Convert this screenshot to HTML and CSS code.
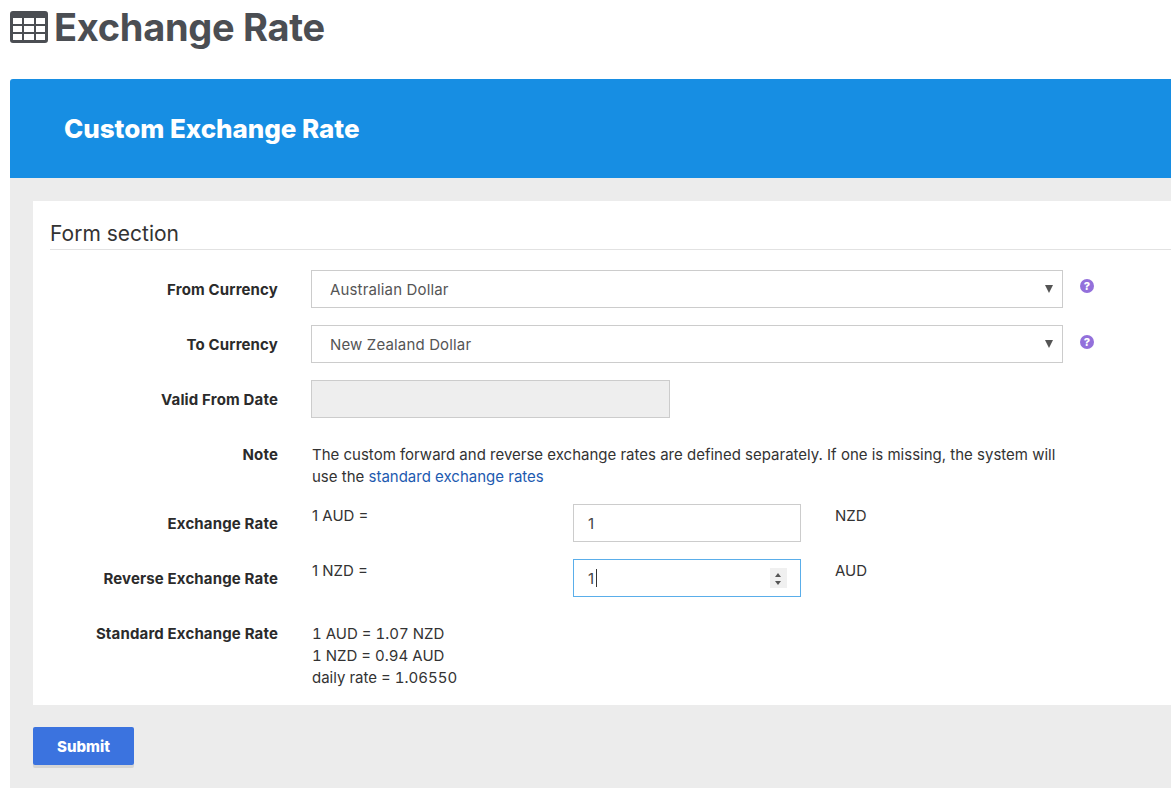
FILE: index.html
```html
<!DOCTYPE html>
<html lang="en">
<head>
<meta charset="utf-8">
<title>Exchange Rate</title>
<link rel="stylesheet" href="styles.css">
</head>
<body>
<h1 class="page-title">
  <svg class="title-icon" viewBox="0 0 38 32" width="38" height="32" aria-hidden="true">
    <path fill="#4b4e53" fill-rule="evenodd" d="M3 0h32a3 3 0 0 1 3 3v26a3 3 0 0 1-3 3H3a3 3 0 0 1-3-3V3a3 3 0 0 1 3-3zM3 7v6h9V7zM14 7v6h10V7zM26 7v6h9V7zM3 15v6h9v-6zM14 15v6h10v-6zM26 15v6h9v-6zM3 23v6h9v-6zM14 23v6h10v-6zM26 23v6h9v-6z"/>
  </svg>
  <span>Exchange Rate</span>
</h1>
<main class="panel">
  <header class="panel-head"><h2>Custom Exchange Rate</h2></header>
  <div class="panel-body">
    <form class="card">
      <h3 class="legend">Form section</h3>
      <div class="row">
        <label class="label">From Currency</label>
        <div class="select-wrap"><select class="control"><option>Australian Dollar</option></select></div>
        <span class="help">?</span>
      </div>
      <div class="row">
        <label class="label">To Currency</label>
        <div class="select-wrap"><select class="control"><option>New Zealand Dollar</option></select></div>
        <span class="help help-low">?</span>
      </div>
      <div class="row">
        <label class="label">Valid From Date</label>
        <div class="split"><div class="control disabled"></div></div>
      </div>
      <div class="row text-row note-row">
        <label class="label">Note</label>
        <p class="note">The custom forward and reverse exchange rates are defined separately. If one is missing, the system will use the <a href="#">standard exchange rates</a></p>
      </div>
      <div class="row">
        <label class="label">Exchange Rate</label>
        <div class="split">
          <span class="unit">1 AUD =</span>
          <input class="control num" type="number" value="1">
          <span class="unit unit-end">NZD</span>
        </div>
      </div>
      <div class="row">
        <label class="label">Reverse Exchange Rate</label>
        <div class="split">
          <span class="unit">1 NZD =</span>
          <div class="num-wrap">
            <input class="control num focus" type="number" value="1">
            <span class="caret"></span>
            <span class="spinner"><i class="up"></i><i class="down"></i></span>
          </div>
          <span class="unit unit-end">AUD</span>
        </div>
      </div>
      <div class="row text-row std-row">
        <label class="label">Standard Exchange Rate</label>
        <p class="note std">1 AUD = 1.07 NZD<br>1 NZD = 0.94 AUD<br>daily rate = 1.06550</p>
      </div>
    </form>
    <button class="submit" type="button">Submit</button>
  </div>
</main>
</body>
</html>
```

FILE: styles.css
```css
* { box-sizing: border-box; }
html, body { margin: 0; height: 800px; overflow: hidden; background: #fff; }
body {
  font-family: "Inter", "Liberation Sans", sans-serif;
  font-size: 15px;
  color: #333;
  padding-left: 10px;
}
.page-title {
  display: flex;
  align-items: center;
  gap: 6px;
  height: 79px;
  margin: 0;
  padding-bottom: 25px;
  font-size: 38px;
  font-weight: 700;
  letter-spacing: -.3px;
  color: #4b4e53;
}
.title-icon { flex: none; }
.panel { width: 1161px; background: #ececec; height: 709px; border-radius: 3px 0 0 0; overflow: hidden; }
.panel-head {
  height: 99px;
  background: #178ee3;
  display: flex;
  align-items: center;
  padding-left: 54px;
}
.panel-head h2 { margin: 0; font-size: 26px; font-weight: 800; color: #fff; letter-spacing: -.05px; }
.panel-body { padding: 23px 0 0 23px; }
.card { background: #fff; height: 504px; padding: 17px 0 0 17px; }
.legend {
  margin: 0 0 20px;
  height: 32px;
  padding-top: 1px;
  font-size: 21px;
  line-height: 30px;
  font-weight: 400;
  color: #333;
  border-bottom: 1px solid #e2e2e2;
}
.row {
  display: grid;
  grid-template-columns: 228px 752px auto;
  column-gap: 33px;
  height: 38px;
  margin-bottom: 17px;
  align-items: center;
}
.label { text-align: right; font-weight: 700; font-size: 15px; letter-spacing: .15px; color: #2b2b2b; }
.control {
  display: block;
  width: 100%;
  height: 38px;
  border: 1px solid #ccc;
  border-radius: 0;
  background: #fff;
  font: inherit;
  letter-spacing: .15px;
  color: #555;
  padding: 0 14px;
  outline: none;
}
select.control { appearance: none; padding-left: 18px; }
.select-wrap { position: relative; height: 38px; }
.select-wrap::after {
  content: "";
  position: absolute;
  right: 10px;
  top: 15px;
  border-left: 4.5px solid transparent;
  border-right: 4.5px solid transparent;
  border-top: 8px solid #555;
}
.disabled { background: #eee; }
.help {
  width: 14px;
  height: 14px;
  margin: -6px 0 0 -16px;
  border-radius: 50%;
  background: #9370db;
  color: #fff;
  font-size: 11px;
  font-weight: 800;
  line-height: 14px;
  text-align: center;
}
.help-low { margin-top: -4px; }
.split {
  display: grid;
  grid-template-columns: 228px 228px auto;
  column-gap: 34px;
  align-items: start;
  height: 38px;
}
.split .control.disabled { width: 359px; grid-column: 1 / 3; }
.unit { padding: 1px 0 0 1px; line-height: 22px; }
.unit-end { padding-left: 0; }
.num { color: #444; appearance: textfield; }
.num::-webkit-inner-spin-button, .num::-webkit-outer-spin-button { appearance: none; margin: 0; }
.num.focus { border-color: #5aaeea; }
.num-wrap { position: relative; height: 38px; }
.caret { position: absolute; left: 23px; top: 10px; width: 1px; height: 18px; background: #333; }
.spinner {
  position: absolute;
  right: 14px;
  top: 9px;
  width: 17px;
  height: 20px;
  background: #f0f0f0;
}
.spinner i { position: absolute; left: 5px; border-left: 3.5px solid transparent; border-right: 3.5px solid transparent; }
.spinner .up { top: 5px; border-bottom: 4px solid #555; }
.spinner .down { bottom: 3px; border-top: 4px solid #555; }
.text-row { align-items: start; padding-top: 9px; }
.text-row .label { line-height: 22px; }
.note { margin: 0 0 0 1px; line-height: 22px; width: 750px; }
.note a { color: #1d5ab0; text-decoration: none; }
.note-row { height: 52px; }
.std-row { height: 74px; }
.std { font-variant-numeric: tabular-nums; }
.submit {
  display: block;
  margin-top: 22px;
  width: 101px;
  height: 38px;
  border: 0;
  border-radius: 2px;
  background: #3b73df;
  box-shadow: 0 3px 0 #d5d5d5;
  color: #fff;
  font: 800 15px "Inter", "Liberation Sans", sans-serif;
}
```
